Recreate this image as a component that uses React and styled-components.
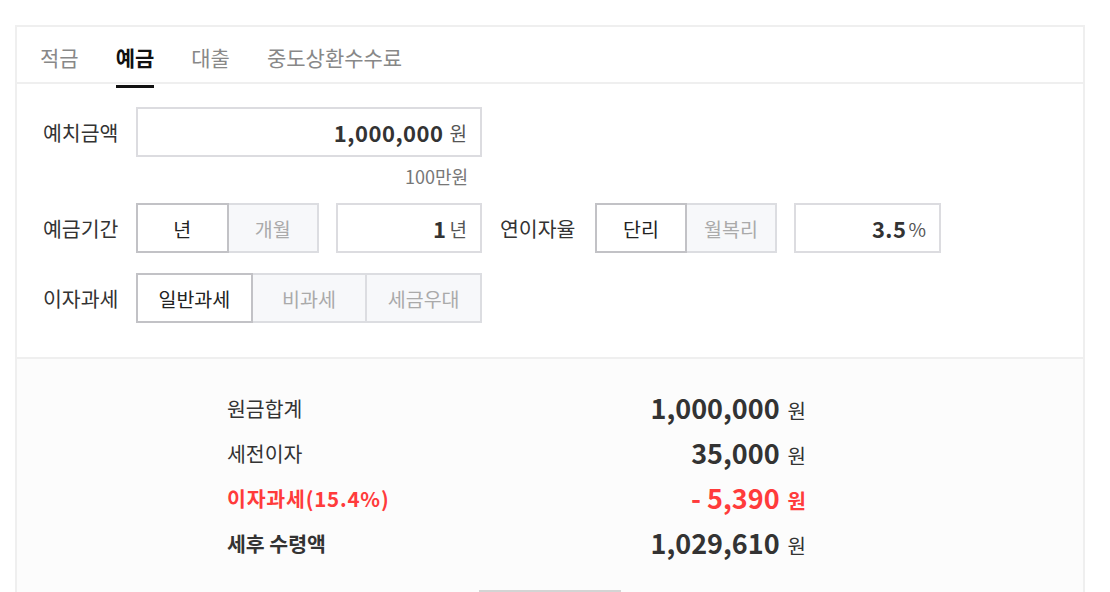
import React from 'react';
import styled, { createGlobalStyle, css } from 'styled-components';

const Global = createGlobalStyle`
  html, body { margin: 0; padding: 0; background: #fff; }
  body { font-family: "Noto Sans CJK KR", "Noto Sans", sans-serif; color: #333; }
  * { box-sizing: border-box; }
`;

const Page = styled.div`
  padding: 25px 0 0 15px;
`;

const Card = styled.section`
  width: 1070px;
  border: 2px solid #efefef;
  border-bottom: none;
`;

const TabBar = styled.nav`
  display: flex;
  gap: 37px;
  height: 57px;
  padding: 4px 0 0 23px;
  border-bottom: 2px solid #efefef;
`;

const Tab = styled.div`
  position: relative;
  display: flex;
  align-items: center;
  font-size: 21px;
  color: ${p => (p.$active ? '#111' : '#888')};
  font-weight: ${p => (p.$active ? 700 : 400)};
  ${p => p.$active && css`
    &::after {
      content: '';
      position: absolute;
      left: 0;
      right: 0;
      bottom: -6px;
      height: 3px;
      background: #111;
    }
  `}
`;

const Form = styled.div`
  display: flex;
  flex-direction: column;
  padding: 23px 0 34px 26px;
`;

const Row = styled.div`
  display: flex;
  align-items: flex-start;
  margin-top: ${p => p.$mt || 0}px;
`;

const Label = styled.div`
  width: ${p => (p.$inline ? '77px' : '93px')};
  margin: ${p => (p.$inline ? '0 18px' : '0')};
  height: 50px;
  line-height: 50px;
  font-size: 20.5px;
  color: #333;
  white-space: nowrap;
`;

const Column = styled.div`
  display: flex;
  flex-direction: column;
  width: ${p => p.$w}px;
`;

const InputBox = styled.div`
  width: ${p => (p.$w ? `${p.$w}px` : '100%')};
  margin-left: ${p => p.$ml || 0}px;
  height: 50px;
  border: 2px solid #dcdce0;
  background: #fff;
  display: flex;
  justify-content: flex-end;
  align-items: center;
  gap: ${p => p.$gap ?? 6}px;
  padding-right: 13px;
`;

const Num = styled.span`
  font-size: 22px;
  font-weight: 700;
  letter-spacing: 0.5px;
  color: #333;
`;

const Unit = styled.span`
  font-size: 19px;
  color: #555;
`;

const Hint = styled.div`
  text-align: right;
  padding: 9px 14px 0 0;
  line-height: 20px;
  font-size: 18px;
  color: #777;
`;

const Toggle = styled.div`
  display: flex;
  width: ${p => p.$w}px;
`;

const ToggleBtn = styled.div`
  flex: 1;
  height: 50px;
  display: flex;
  align-items: center;
  justify-content: center;
  font-size: 19.5px;
  border: 2px solid ${p => (p.$on ? '#c2c2c6' : '#dcdde1')};
  background: ${p => (p.$on ? '#fff' : '#f7f8fa')};
  color: ${p => (p.$on ? '#222' : '#aaa')};
  position: relative;
  z-index: ${p => (p.$on ? 1 : 0)};
  & + & { margin-left: -2px; }
`;

const Result = styled.div`
  background: #fcfcfc;
  border-top: 2px solid #efefef;
  padding: 26px 0 0 0;
`;

const ResultList = styled.div`
  display: flex;
  flex-direction: column;
  width: 579px;
  margin-left: 210px;
`;

const ResultRow = styled.div`
  display: flex;
  justify-content: space-between;
  align-items: center;
  height: 45px;
  color: ${p => (p.$red ? '#ff3b3b' : '#333')};
`;

const ResultLabel = styled.span`
  font-size: 20.5px;
  font-weight: ${p => (p.$bold ? 700 : 400)};
  letter-spacing: ${p => (p.$wide ? '0.8px' : '0')};
`;

const ResultValue = styled.span`
  display: flex;
  align-items: baseline;
  gap: 8px;
`;

const BigNum = styled.span`
  font-size: 27px;
  font-weight: 700;
`;

const Won = styled.span`
  font-size: 20px;
  font-weight: ${p => (p.$bold ? 700 : 400)};
`;

const Actions = styled.div`
  display: flex;
  justify-content: center;
  padding: 25px 0 30px;
`;

const ActionButton = styled.button`
  width: 142px;
  height: 50px;
  border: 2px solid #d4d4d4;
  background: #fff;
`;

const tabs = ['적금', '예금', '대출', '중도상환수수료'];

const results = [
  { label: '원금합계', value: '1,000,000' },
  { label: '세전이자', value: '35,000' },
  { label: '이자과세(15.4%)', value: '- 5,390', red: true },
  { label: '세후 수령액', value: '1,029,610', bold: true },
];

export default function App() {
  return (
    <>
      <Global />
      <Page>
        <Card>
          <TabBar>
            {tabs.map(t => (
              <Tab key={t} $active={t === '예금'}>{t}</Tab>
            ))}
          </TabBar>
          <Form>
            <Row>
              <Label>예치금액</Label>
              <Column $w={346}>
                <InputBox>
                  <Num>1,000,000</Num>
                  <Unit>원</Unit>
                </InputBox>
                <Hint>100만원</Hint>
              </Column>
            </Row>
            <Row $mt={17}>
              <Label>예금기간</Label>
              <Toggle $w={183}>
                <ToggleBtn $on>년</ToggleBtn>
                <ToggleBtn>개월</ToggleBtn>
              </Toggle>
              <InputBox $w={146} $ml={17} $gap={3}>
                <Num>1</Num>
                <Unit>년</Unit>
              </InputBox>
              <Label $inline>연이자율</Label>
              <Toggle $w={182}>
                <ToggleBtn $on>단리</ToggleBtn>
                <ToggleBtn>월복리</ToggleBtn>
              </Toggle>
              <InputBox $w={147} $ml={17} $gap={2}>
                <Num>3.5</Num>
                <Unit>%</Unit>
              </InputBox>
            </Row>
            <Row $mt={20}>
              <Label>이자과세</Label>
              <Toggle $w={346}>
                <ToggleBtn $on>일반과세</ToggleBtn>
                <ToggleBtn>비과세</ToggleBtn>
                <ToggleBtn>세금우대</ToggleBtn>
              </Toggle>
            </Row>
          </Form>
          <Result>
            <ResultList>
              {results.map(r => (
                <ResultRow key={r.label} $red={r.red}>
                  <ResultLabel $bold={r.red || r.bold} $wide={r.red}>{r.label}</ResultLabel>
                  <ResultValue>
                    <BigNum>{r.value}</BigNum>
                    <Won $bold={r.red}>원</Won>
                  </ResultValue>
                </ResultRow>
              ))}
            </ResultList>
            <Actions>
              <ActionButton aria-label="action" />
            </Actions>
          </Result>
        </Card>
      </Page>
    </>
  );
}
